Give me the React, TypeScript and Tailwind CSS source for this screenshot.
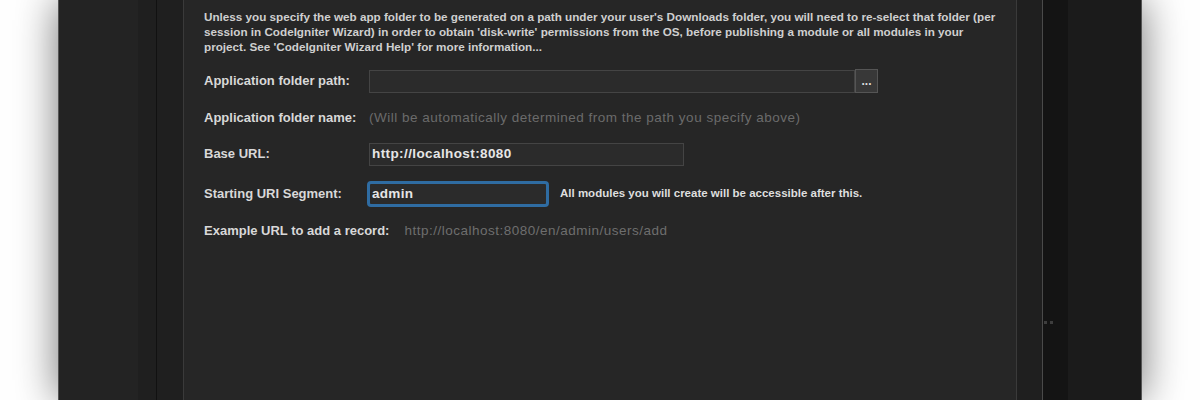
import React from "react";

const FONT = { fontFamily: '"Liberation Sans", Arial, sans-serif' };

function Row({ label, h = "h-[24px]", mt, pr = "pr-[12px]", children }: { label: string; h?: string; mt: string; pr?: string; children: React.ReactNode }) {
  return (
    <div className={`flex items-center ${h} ${mt}`}>
      <span className={`min-w-[165px] ${pr} whitespace-nowrap text-[13px] font-bold text-[#d8d8d8]`}>{label}</span>
      {children}
    </div>
  );
}

export default function App() {
  return (
    <div className="h-[400px] w-[1200px] overflow-hidden bg-white" style={FONT}>
      <div className="mx-[58px] flex h-full border-x border-[#555] shadow-[0_0_40px_rgba(0,0,0,0.55)]">
        <div className="w-[79px] bg-[#232323]" />
        <div className="w-[18px] bg-[#1f1f1f]" />
        <div className="w-px bg-[#111]" />
        <div className="w-[26px] bg-[#1f1f1f]" />

        <div className="w-[834px] border-x border-[#3a3a3a] bg-[#262626] pl-[20px] pt-[9px]">
          <p className="w-[796px] text-[11.7px] font-bold leading-[15px] text-[#cfcfcf]">
            Unless you specify the web app folder to be generated on a path under your user&apos;s Downloads folder, you will need to re-select that folder (per session in CodeIgniter Wizard) in order to obtain &apos;disk-write&apos; permissions from the OS, before publishing a module or all modules in your project. See &apos;CodeIgniter Wizard Help&apos; for more information...
          </p>

          <Row label="Application folder path:" mt="mt-[15px]">
            <div className="h-[23px] w-[486px] border border-[#444] bg-[#2b2b2b]" />
            <div className="flex h-[24px] w-[23px] items-center justify-center border border-[#555] bg-[#383838] text-[12px] font-bold leading-none text-[#ddd]">
              ...
            </div>
          </Row>

          <Row label="Application folder name:" mt="mt-[13px]">
            <span className="whitespace-nowrap text-[13.5px] tracking-[0.5px] text-[#6b6b6b]">(Will be automatically determined from the path you specify above)</span>
          </Row>

          <Row label="Base URL:" mt="mt-[12px]">
            <div className="flex h-[23px] w-[315px] items-center border border-[#444] bg-[#2b2b2b] px-[2px] text-[13.5px] font-bold tracking-[0.4px] text-[#e6e6e6]">
              http://localhost:8080
            </div>
          </Row>

          <Row label="Starting URI Segment:" h="h-[28px]" mt="mt-[14px]">
            <div className="-ml-[2px] flex h-[26px] w-[182px] items-center rounded-[4px] border-[3px] border-[#2f6ca2] bg-[#2b2b2b] px-[2px] text-[13.5px] font-bold tracking-[0.3px] text-[#e6e6e6]">
              admin
            </div>
            <span className="ml-[11px] whitespace-nowrap text-[11.5px] font-bold text-[#dedede]">
              All modules you will create will be accessible after this.
            </span>
          </Row>

          <Row label="Example URL to add a record:" mt="mt-[11px]" pr="pr-[15px]">
            <span className="whitespace-nowrap text-[13.5px] tracking-[0.5px] text-[#6e6e6e]">http://localhost:8080/en/admin/users/add</span>
          </Row>
        </div>

        <div className="w-[25px] bg-[#1f1f1f]" />
        <div className="w-px bg-[#4a4a4a]" />
        <div className="relative w-[25px] bg-[#141414]">
          <div className="absolute left-[1px] top-[321px] flex gap-[3px]">
            <span className="h-[3px] w-[3px] bg-[#3e3e3e]" />
            <span className="h-[3px] w-[3px] bg-[#3e3e3e]" />
          </div>
        </div>
        <div className="flex-1 bg-[#1b1b1b]" />
      </div>
    </div>
  );
}
